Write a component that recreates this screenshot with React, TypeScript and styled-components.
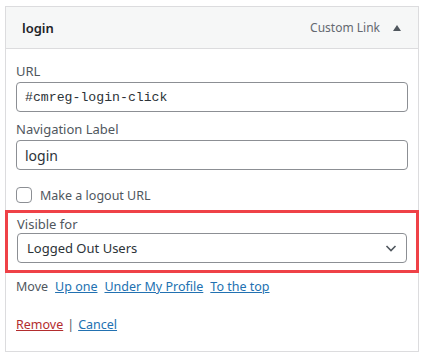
import styled, { createGlobalStyle } from 'styled-components';

const GlobalStyle = createGlobalStyle`
  html, body {
    margin: 0;
    padding: 0;
    background: #ffffff;
  }
  body {
    font-family: "Noto Sans", "Open Sans", sans-serif;
    font-size: 13px;
    color: #50575e;
  }
`;

const Panel = styled.div`
  margin: 6px 0 0 5px;
  width: 414px;
  height: 346px;
  box-sizing: border-box;
  border: 1px solid #dcdcde;
  display: flex;
  flex-direction: column;
`;

const Header = styled.div`
  display: flex;
  align-items: center;
  height: 41px;
  padding: 0 16px;
  background: #f6f7f7;
  border-bottom: 1px solid #dcdcde;
`;

const Title = styled.span`
  flex: 1;
  font-size: 13px;
  font-weight: 600;
  color: #1d2327;
`;

const ItemType = styled.span`
  font-size: 12px;
  color: #646970;
  margin-right: 13px;
`;

const Toggle = styled.span`
  width: 0;
  height: 0;
  border-left: 4px solid transparent;
  border-right: 4px solid transparent;
  border-bottom: 6px solid #50575e;
  margin-right: 1px;
`;

const Body = styled.div`
  display: flex;
  flex-direction: column;
  padding: 13px 10px 0 10px;
`;

const Field = styled.div<{ $gap?: number }>`
  display: flex;
  flex-direction: column;
  margin-bottom: ${p => p.$gap ?? 8}px;
`;

const Label = styled.label<{ $tight?: boolean }>`
  font-size: 13px;
  line-height: 18px;
  color: #50575e;
  margin-bottom: ${p => (p.$tight ? 0 : 2)}px;
`;

const TextInput = styled.input<{ $mono?: boolean }>`
  height: 30px;
  box-sizing: border-box;
  border: 1px solid #8c8f94;
  border-radius: 4px;
  padding: 0 8px;
  font-family: ${p => (p.$mono ? '"Liberation Mono", monospace' : '"Noto Sans", "Open Sans", sans-serif')};
  font-size: ${p => (p.$mono ? 13.2 : 14)}px;
  color: #2c3338;
  background: #fff;
  outline: none;
`;

const CheckRow = styled.label`
  display: flex;
  align-items: center;
  gap: 8px;
  font-size: 12.5px;
  color: #50575e;
  margin: 17px 0 7px 0;
  height: 16px;
`;

const Box = styled.span`
  width: 16px;
  height: 16px;
  box-sizing: border-box;
  border: 1px solid #8c8f94;
  border-radius: 4px;
  background: #fff;
`;

const Highlight = styled.div`
  margin: 0 -11px;
  padding: 2px 9px 7px 9px;
  border: 3px solid #ef4147;
  display: flex;
  flex-direction: column;
`;

const Select = styled.div`
  display: flex;
  align-items: center;
  justify-content: space-between;
  height: 30px;
  box-sizing: border-box;
  border: 1px solid #8c8f94;
  border-radius: 4px;
  padding: 0 8px 0 9px;
  font-size: 13px;
  color: #2c3338;
  background: #fff;
`;

const MoveRow = styled.div`
  display: flex;
  gap: 7px;
  align-items: center;
  margin-top: 5px;
  line-height: 18px;
  font-size: 12.5px;
  color: #50575e;
`;

const Link = styled.a<{ $danger?: boolean }>`
  color: ${p => (p.$danger ? '#b32d2e' : '#2271b1')};
  text-decoration: underline;
  cursor: pointer;
`;

const Actions = styled.div`
  margin-top: 20px;
  line-height: 18px;
  font-size: 12.5px;
  color: #50575e;
  display: flex;
  gap: 4px;
`;

const Chevron = () => (
  <svg width="14" height="14" viewBox="0 0 14 14" fill="none">
    <path d="M2.5 5l4.5 4.5L11.5 5" stroke="#50575e" strokeWidth="1.6" />
  </svg>
);

export default function App() {
  return (
    <>
      <GlobalStyle />
      <Panel>
        <Header>
          <Title>login</Title>
          <ItemType>Custom Link</ItemType>
          <Toggle />
        </Header>
        <Body>
          <Field>
            <Label>URL</Label>
            <TextInput $mono readOnly value="#cmreg-login-click" />
          </Field>
          <Field $gap={0}>
            <Label>Navigation Label</Label>
            <TextInput readOnly value="login" />
          </Field>
          <CheckRow>
            <Box />
            Make a logout URL
          </CheckRow>
          <Highlight>
            <Label $tight>Visible for</Label>
            <Select>
              Logged Out Users
              <Chevron />
            </Select>
          </Highlight>
          <MoveRow>
            Move
            <Link>Up one</Link>
            <Link>Under My Profile</Link>
            <Link>To the top</Link>
          </MoveRow>
          <Actions>
            <Link $danger>Remove</Link>|<Link>Cancel</Link>
          </Actions>
        </Body>
      </Panel>
    </>
  );
}
